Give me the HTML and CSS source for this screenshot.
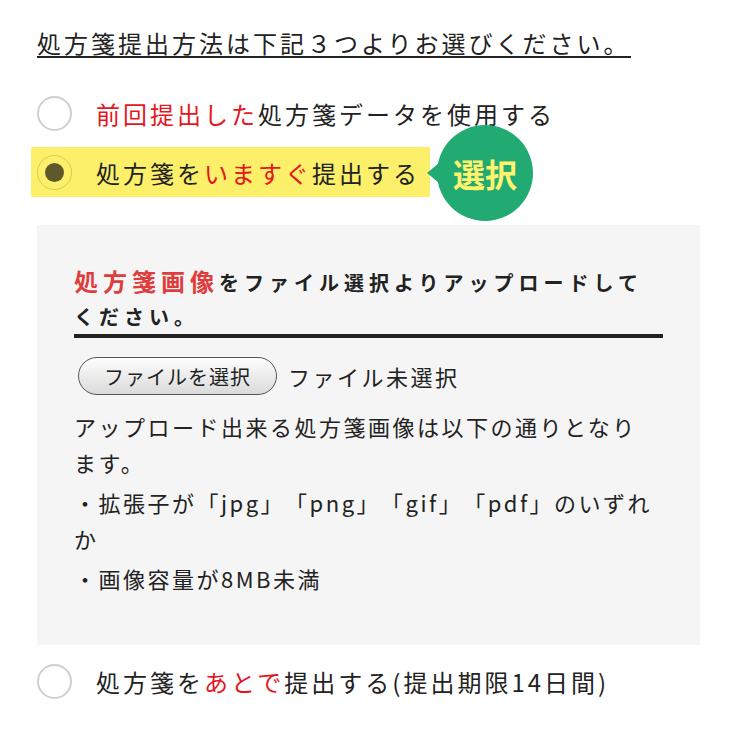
FILE: index.html
```html
<!DOCTYPE html>
<html lang="ja">
<head>
<meta charset="utf-8">
<title>処方箋提出方法</title>
<link rel="stylesheet" href="styles.css">
</head>
<body>
<main class="page">
  <p class="title">処方箋提出方法は下記３つよりお選びください。</p>

  <label class="option">
    <span class="radio"></span>
    <span class="option-text"><span class="red">前回提出した</span>処方箋データを使用する</span>
  </label>

  <div class="option-wrap">
    <label class="option selected">
      <span class="radio"><span class="dot"></span></span>
      <span class="option-text">処方箋を<span class="red">いますぐ</span>提出する</span>
    </label>
    <div class="bubble">選択</div>
  </div>

  <section class="upload-box">
    <h2 class="upload-title"><span class="title-red">処方箋画像</span>をファイル選択よりアップロードして<br>ください。</h2>
    <div class="file-row">
      <span class="file-btn">ファイルを選択</span>
      <span class="file-status">ファイル未選択</span>
    </div>
    <p class="note">アップロード出来る処方箋画像は以下の通りとなります。</p>
    <ul class="rules">
      <li>・拡張子が「jpg」「png」「gif」「pdf」のいずれか</li>
      <li>・画像容量が8MB未満</li>
    </ul>
  </section>

  <label class="option last">
    <span class="radio"></span>
    <span class="option-text">処方箋を<span class="red">あとで</span>提出する(提出期限14日間)</span>
  </label>
</main>
</body>
</html>
```

FILE: styles.css
```css
* { box-sizing: border-box; }

body {
  margin: 0;
  background: #fff;
  color: #222;
  font-family: "Noto Sans CJK JP", "Noto Sans", sans-serif;
  text-spacing-trim: space-all;
}

.page {
  padding: 31px 36px 0 37px;
}

.title {
  display: inline-block;
  margin: 0;
  font-size: 24px;
  line-height: 24px;
  letter-spacing: 3px;
  padding-bottom: 1px;
  border-bottom: 2px solid #222;
}

.option {
  display: flex;
  align-items: center;
  height: 50px;
  margin-top: 30px;
  font-size: 24px;
  letter-spacing: 3px;
}

.option-text { margin-left: 24px; white-space: nowrap; }

.red { color: #e5161e; }

.radio {
  width: 35px;
  height: 35px;
  flex: none;
  border-radius: 50%;
  border: 2px solid #cfcfcf;
  background: #fff;
  display: flex;
  align-items: center;
  justify-content: center;
}

.option-wrap {
  position: relative;
  margin-top: 9px;
}

.option.selected {
  display: inline-flex;
  margin: 0 0 0 -6px;
  padding: 0 10px 0 6px;
  background: #fcef69;
}

.option.selected .radio {
  border: 1.5px solid #d5ca5c;
  background: transparent;
}

.dot {
  width: 19px;
  height: 19px;
  border-radius: 50%;
  background: #5e582b;
}

.bubble {
  position: absolute;
  left: 400px;
  top: -22px;
  width: 96px;
  height: 96px;
  border-radius: 50%;
  background: #22aa73;
  color: #fff36e;
  font-size: 32px;
  font-weight: bold;
  line-height: 96px;
  text-align: center;
}

.bubble::before {
  content: "";
  position: absolute;
  left: -10px;
  top: 38px;
  border-right: 12px solid #22aa73;
  border-top: 10px solid transparent;
  border-bottom: 10px solid transparent;
}

.upload-box {
  margin-top: 28px;
  background: #f5f5f5;
  padding: 39px 37px 49px 37px;
}

.upload-title {
  margin: 0;
  font-size: 20px;
  font-weight: bold;
  letter-spacing: 5px;
  line-height: 34px;
  border-bottom: 4px solid #222;
  white-space: nowrap;
}

.title-red {
  color: #e03c3c;
  font-size: 24px;
}

.file-row {
  display: flex;
  align-items: center;
  margin-top: 19px;
}

.file-btn {
  display: inline-flex;
  align-items: center;
  height: 38px;
  margin-left: 4px;
  padding: 0 25px;
  border: 1.5px solid #555;
  border-radius: 19px;
  background: linear-gradient(#fefefe, #dadada);
  box-shadow: inset 0 1px 0 #fff;
  font-size: 20px;
  letter-spacing: 1px;
}

.file-status {
  margin-left: 11px;
  font-size: 22px;
  letter-spacing: 2.5px;
}

.note, .rules {
  max-width: 584px;
  font-size: 22px;
  letter-spacing: 2.5px;
  line-height: 36px;
}

.note { margin: 13px 0 0; }

.rules {
  list-style: none;
  margin: 0;
  padding: 0;
}

.rules li { margin-top: 4px; }

.option.last { margin-top: 11px; }
```
